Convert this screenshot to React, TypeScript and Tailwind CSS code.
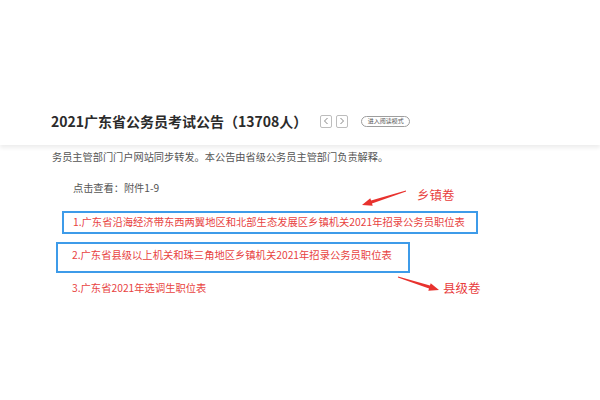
import React from "react";

const cjk = { fontFamily: '"Noto Sans CJK SC", "Noto Sans", sans-serif' };

function NavBox({ dir }: { dir: "left" | "right" }) {
  return (
    <span className="flex h-[13px] w-[12px] items-center justify-center rounded-[2px] border border-[#bdbdbd] bg-white">
      <svg width="6" height="8" viewBox="0 0 6 8" fill="none">
        {dir === "left" ? (
          <polyline points="4.5,1 1.5,4 4.5,7" stroke="#777" strokeWidth="0.9" />
        ) : (
          <polyline points="1.5,1 4.5,4 1.5,7" stroke="#777" strokeWidth="0.9" />
        )}
      </svg>
    </span>
  );
}

export default function App() {
  return (
    <div className="relative h-[400px] w-[600px] overflow-hidden bg-white" style={cjk}>
      {/* header */}
      <div className="relative z-10 flex h-[145px] flex-col justify-end bg-white pb-[14px] pl-[51px] shadow-[0_3px_4px_rgba(0,0,0,0.07)]">
        <div className="flex h-[20px] items-center">
          <h1 className="text-[14px] font-bold leading-none text-[#2b2b2b]">2021广东省公务员考试公告（13708人）</h1>
          <div className="ml-[13px] flex gap-[4px]">
            <NavBox dir="left" />
            <NavBox dir="right" />
          </div>
          <span className="ml-[13px] flex h-[11px] w-[49px] items-center justify-center rounded-full border border-[#9e9e9e] text-[6px] leading-none text-[#555]">
            进入阅读模式
          </span>
        </div>
      </div>

      {/* body */}
      <div className="pt-[4px]">
        <p className="pl-[52px] text-[10.2px] leading-[16px] text-[#555]">
          务员主管部门门户网站同步转发。本公告由省级公务员主管部门负责解释。
        </p>
        <p className="mt-[15px] pl-[73px] text-[10.2px] leading-[16px] text-[#555]">点击查看：附件1-9</p>

        <div className="ml-[62px] mt-[15px] flex h-[23px] w-[416px] items-center border-2 border-[#3d9be9] pl-[9px]">
          <p className="text-[10.3px] leading-none text-[#e8433f]">
            1.广东省沿海经济带东西两翼地区和北部生态发展区乡镇机关2021年招录公务员职位表
          </p>
        </div>

        <div className="ml-[56px] mt-[8px] h-[31px] w-[354px] border-2 border-[#3d9be9] pl-[14px] pt-[3px]">
          <p className="text-[10.3px] leading-[16px] text-[#e8433f]">
            2.广东省县级以上机关和珠三角地区乡镇机关2021年招录公务员职位表
          </p>
        </div>

        <p className="mt-[7px] pl-[72px] text-[10.3px] leading-[16px] text-[#e8433f]">3.广东省2021年选调生职位表</p>
      </div>

      {/* annotations */}
      <svg className="pointer-events-none absolute left-0 top-0" width="600" height="400" viewBox="0 0 600 400">
        <polygon
          points="405.9,190.6 371.05,200.57 370.3,198.2 362,205 372.7,205.8 371.95,203.43 406.1,191.4"
          fill="#e8322e"
        />
        <polygon
          points="398.12,276.62 429.95,285.57 430.7,283.2 439,290 428.3,290.8 429.05,288.43 397.88,277.38"
          fill="#e8322e"
        />
      </svg>
      <span className="absolute left-[417px] top-[187px] text-[12.5px] leading-[16px] text-[#e83c3c]">乡镇卷</span>
      <span className="absolute left-[443px] top-[280px] text-[12.5px] leading-[16px] text-[#e83c3c]">县级卷</span>
    </div>
  );
}
